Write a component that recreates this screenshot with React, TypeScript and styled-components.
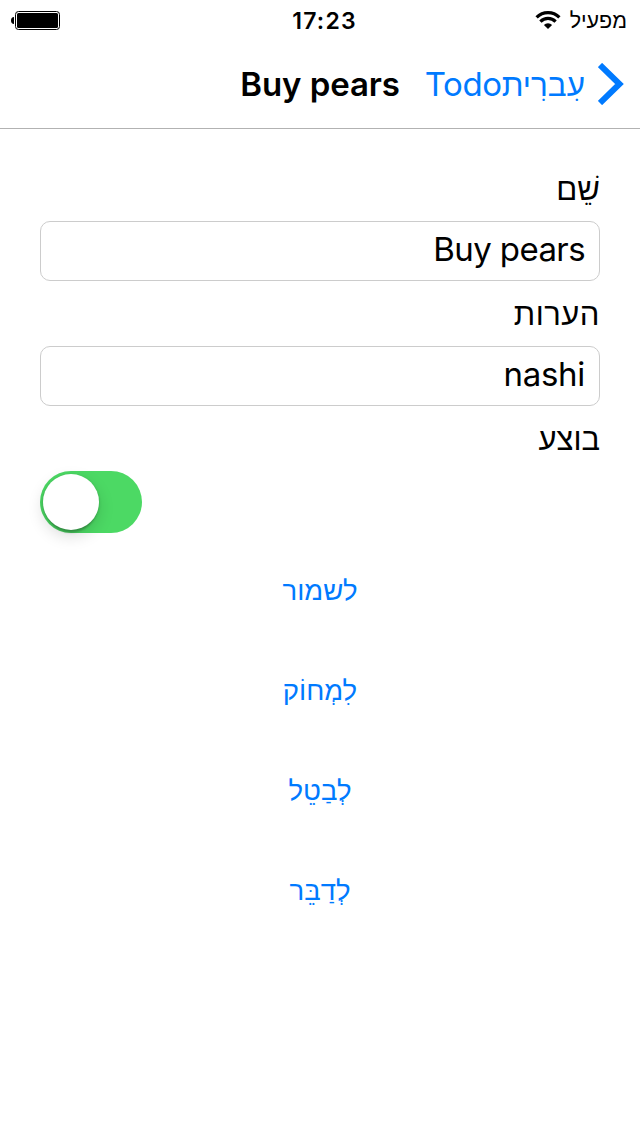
import React from 'react';
import styled, { createGlobalStyle } from 'styled-components';

const BLUE = '#007aff';

const GlobalStyle = createGlobalStyle`
  *, *::before, *::after { box-sizing: border-box; }
  body {
    margin: 0;
    background: #fff;
    color: #000;
    font-family: Inter, "Liberation Sans", sans-serif;
  }
`;

const Screen = styled.div`
  width: 640px;
  height: 1136px;
  background: #fff;
  overflow: hidden;
`;

const Text = styled.span<{ $size: number; $weight?: number; $spacing?: number; $shift?: number }>`
  display: block;
  white-space: nowrap;
  font-family: Inter, sans-serif;
  font-size: ${(p) => p.$size}px;
  font-weight: ${(p) => p.$weight ?? 400};
  letter-spacing: ${(p) => p.$spacing ?? 0}px;
  line-height: 40px;
  transform: translateY(${(p) => p.$shift ?? 0}px);
`;

const Hebrew = styled(Text)`
  font-family: "Liberation Sans", sans-serif;
`;

const StatusBar = styled.header`
  display: grid;
  grid-template-columns: 1fr auto 1fr;
  align-items: center;
  height: 40px;
  padding: 0 13px 0 11px;
`;

const Carrier = styled.div`
  display: flex;
  align-items: center;
  gap: 9px;
`;

const Battery = styled.svg`
  display: block;
  justify-self: end;
`;

const Clock = styled.div`
  padding-left: 11px;
`;

const NavBar = styled.nav`
  display: flex;
  align-items: center;
  height: 89px;
  padding: 0 16px;
  border-bottom: 1px solid #b2b2b2;
`;

const BackButton = styled.a`
  display: flex;
  align-items: center;
  gap: 13px;
  color: ${BLUE};
`;

const BackLabel = styled.div`
  display: flex;
`;

const Title = styled.h1`
  margin: 0 25px 0 0;
`;

const Form = styled.main`
  display: flex;
  flex-direction: column;
  padding: 42px 40px 0;
`;

const Label = styled.label`
  display: block;
  height: 50px;
`;

const Field = styled.div`
  display: flex;
  align-items: center;
  height: 60px;
  margin-bottom: 15px;
  padding: 0 14px;
  border: 1px solid #ccc;
  border-radius: 10px;
`;

const Switch = styled.div`
  align-self: flex-end;
  display: flex;
  justify-content: flex-end;
  width: 102px;
  height: 62px;
  padding: 3px;
  border-radius: 31px;
  background: #4cd964;
`;

const Knob = styled.div`
  width: 56px;
  height: 56px;
  border-radius: 50%;
  background: #fff;
  box-shadow: 0 6px 16px rgba(0, 0, 0, 0.15), 0 6px 2px -3px rgba(0, 0, 0, 0.16), 0 1px 3px rgba(0, 0, 0, 0.2);
`;

const Actions = styled.div`
  display: flex;
  flex-direction: column;
  align-items: center;
  gap: 60px;
  margin-top: 37px;
`;

const Action = styled.a`
  height: 40px;
  color: ${BLUE};
`;

const actions = ['לשמור', 'לִמְחוֹק', 'לְבַטֵל', 'לְדַבֵּר'];

export default function App() {
  return (
    <Screen dir="rtl">
      <GlobalStyle />
      <StatusBar>
        <Carrier>
          <Hebrew $size={21.5} $shift={1}>מפעיל</Hebrew>
          <svg width="26" height="20" viewBox="0 0 26 20">
            <g fill="none" stroke="#000" strokeWidth="3.2">
              <path d="M1.6 7.3a16.1 16.1 0 0 1 22.8 0" />
              <path d="M5.4 11.6a10.7 10.7 0 0 1 15.2 0" />
            </g>
            <path d="M8.9 15a5.8 5.8 0 0 1 8.2 0L13 19z" />
          </svg>
        </Carrier>
        <Clock><Text $size={23} $weight={600} $spacing={1.2} $shift={1}>17:23</Text></Clock>
        <Battery width="49" height="19" viewBox="0 0 49 19">
          <path d="M3 6v7C1 13 0 11.500 0 9.500S1 6 3 6z" />
          <rect x="4.500" y="0.500" width="44" height="18" rx="3" fill="none" stroke="#000" />
          <rect x="6" y="2" width="41" height="15" rx="1.500" />
        </Battery>
      </StatusBar>
      <NavBar>
        <BackButton>
          <svg width="26" height="42" viewBox="0 0 26 42">
            <path d="M2 2L21.500 21 2 40" fill="none" stroke={BLUE} strokeWidth="6" />
          </svg>
          <BackLabel>
            <Hebrew $size={31.5} $shift={1}>עִברִית</Hebrew>
            <Text $size={33} $spacing={-0.4}>Todo</Text>
          </BackLabel>
        </BackButton>
        <Title>
          <Text $size={33} $weight={600} $spacing={-0.1}>Buy pears</Text>
        </Title>
      </NavBar>
      <Form>
        <Label><Hebrew $size={31} $shift={-1}>שֵׁם</Hebrew></Label>
        <Field><Text $size={33} $spacing={-0.6} $shift={-2}>Buy pears</Text></Field>
        <Label><Hebrew $size={31} $spacing={0.5} $shift={-1}>הערות</Hebrew></Label>
        <Field><Text $size={33} $spacing={-0.3} $shift={-2}>nashi</Text></Field>
        <Label><Hebrew $size={31} $shift={-1}>בוצע</Hebrew></Label>
        <Switch role="switch" aria-checked="true"><Knob /></Switch>
        <Actions>
          {actions.map((label) => (
            <Action key={label}><Hebrew $size={27.5} $shift={0.5}>{label}</Hebrew></Action>
          ))}
        </Actions>
      </Form>
    </Screen>
  );
}
